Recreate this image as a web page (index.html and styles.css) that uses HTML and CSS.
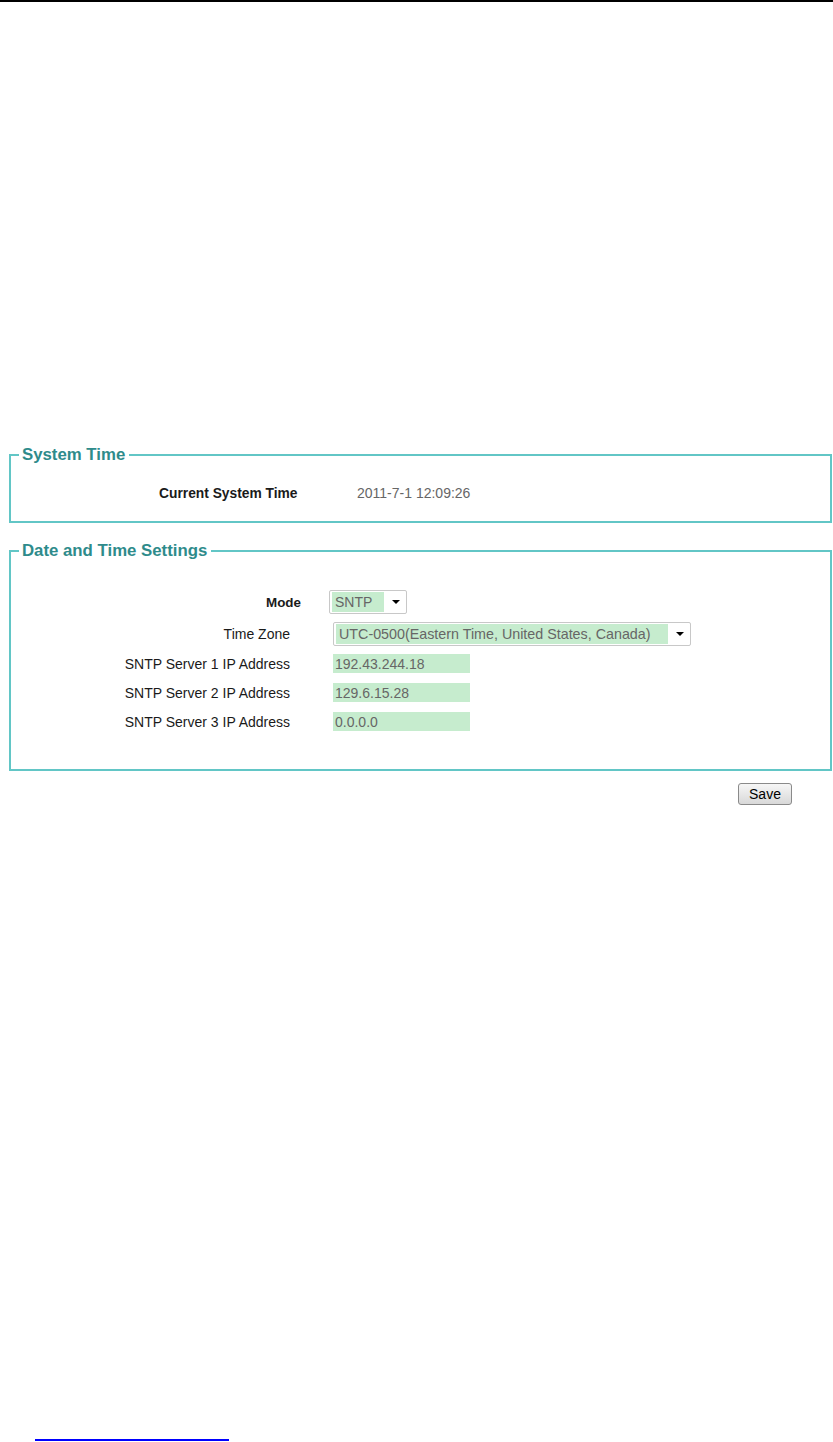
FILE: index.html
```html
<!DOCTYPE html>
<html lang="en">
<head>
  <meta charset="UTF-8">
  <title>System Time</title>
  <link rel="stylesheet" href="styles.css">
</head>
<body>
    <div class="top-rule"></div>

    <div class="page">
        <fieldset class="panel panel-time">
            <legend>System Time</legend>
            <div class="time-row">
                <span class="time-label">Current System Time</span>
                <span class="time-value">2011-7-1 12:09:26</span>
            </div>
        </fieldset>

        <fieldset class="panel panel-settings">
            <legend>Date and Time Settings</legend>

            <div class="mode-row">
                <span class="mode-label">Mode</span>
                <div class="fake-select mode-select">
                    <span class="fake-select-text">SNTP</span>
                    <span class="caret"></span>
                </div>
            </div>

            <div class="row tz-row">
                <span class="label">Time Zone</span>
                <div class="fake-select tz-select">
                    <span class="fake-select-text">UTC-0500(Eastern Time, United States, Canada)</span>
                    <span class="caret"></span>
                </div>
            </div>

            <div class="row server-row">
                <span class="label">SNTP Server 1 IP Address</span>
                <input class="ip-input" type="text" value="192.43.244.18">
            </div>
            <div class="row server-row">
                <span class="label">SNTP Server 2 IP Address</span>
                <input class="ip-input" type="text" value="129.6.15.28">
            </div>
            <div class="row server-row">
                <span class="label">SNTP Server 3 IP Address</span>
                <input class="ip-input" type="text" value="0.0.0.0">
            </div>
        </fieldset>

        <div class="actions">
            <button class="save-btn" type="button">Save</button>
        </div>
    </div>

    <a class="footer-link" href="#"></a>
</body>
</html>
```

FILE: styles.css
```css
body {
  margin: 0;
  padding: 0;
  background: #fff;
  color: #1a1a1a;
  font-family: 'Liberation Sans', Arial, sans-serif;
  font-size: 14px;
}
.top-rule {
  height: 2px;
  background: #000;
}
.page {
  padding-top: 444px;
}
.panel {
  margin: 0 1px 0 9px;
  padding: 0;
  border: 2px solid #62c6c6;
  min-width: 0;
}
.panel legend {
  margin-left: 8px;
  padding: 0 4px 0 3px;
  color: #2e8b8b;
  font-size: 16.8px;
  font-weight: bold;
  line-height: 17px;
}
.panel-time {
  padding: 20px 0 18px;
}
.time-row {
  display: flex;
  align-items: center;
  height: 20px;
  padding-left: 148px;
}
.time-label {
  width: 198px;
  font-size: 13.8px;
  font-weight: bold;
}
.time-value {
  color: #666;
  font-size: 14px;
}
.panel-settings {
  margin-top: 19px;
  padding: 31px 0 38px;
}
.mode-row {
  display: flex;
  align-items: center;
  height: 24px;
}
.mode-label {
  width: 290px;
  text-align: right;
  font-size: 13.4px;
  font-weight: bold;
}
.mode-row .fake-select {
  margin-left: 28px;
}
.row {
  display: flex;
  align-items: center;
  margin-top: 10px;
}
.tz-row {
  margin-top: 8px;
  height: 24px;
}
.tz-row + .server-row {
  margin-top: 8px;
}
.label {
  width: 279px;
  text-align: right;
}
.row .fake-select,
.row .ip-input {
  margin-left: 43px;
}
.fake-select {
  display: flex;
  align-items: center;
  box-sizing: border-box;
  height: 24px;
  padding: 0 2px;
  border: 1px solid #c8c8c8;
  border-radius: 2px;
  background: #fff;
}
.fake-select-text {
  display: block;
  height: 20px;
  line-height: 20px;
  padding-left: 3px;
  background: #c6ecce;
  color: #666;
  font-size: 14px;
  white-space: nowrap;
}
.mode-select {
  width: 78px;
}
.mode-select .fake-select-text {
  width: 49px;
}
.tz-select {
  width: 358px;
}
.tz-select .fake-select-text {
  width: 329px;
  font-size: 14.3px;
}
.caret {
  margin-left: auto;
  margin-right: 4px;
  width: 0;
  height: 0;
  border-left: 4.5px solid transparent;
  border-right: 4.5px solid transparent;
  border-top: 4.5px solid #000;
}
.ip-input {
  box-sizing: border-box;
  width: 137px;
  height: 19px;
  padding: 0 2px;
  border: none;
  background: #c6ecce;
  color: #666;
  font-family: inherit;
  font-size: 14px;
}
.actions {
  display: flex;
  justify-content: flex-end;
  padding: 12px 41px 0 0;
}
.save-btn {
  width: 54px;
  height: 22px;
  padding: 0;
  border: 1px solid #8a8a8a;
  border-radius: 3px;
  background: linear-gradient(#f6f6f6, #d8d8d8);
  color: #000;
  font-family: inherit;
  font-size: 14px;
}
.footer-link {
  display: block;
  width: 194px;
  margin: 634px 0 0 35px;
  border-bottom: 2px solid #0000ff;
}
```
